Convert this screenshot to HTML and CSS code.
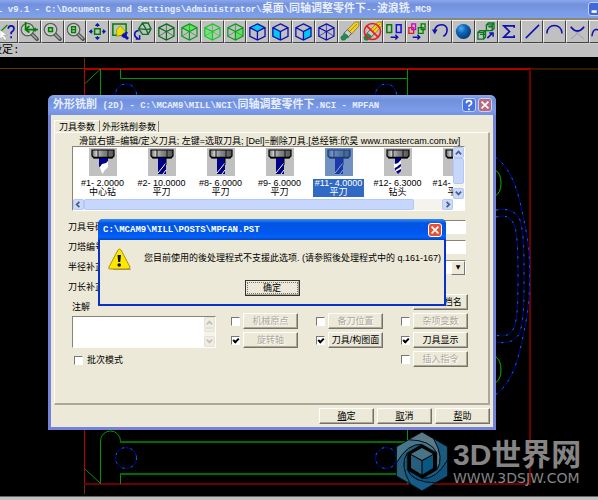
FILE: index.html
```html
<!DOCTYPE html>
<html lang="zh-CN">
<head>
<meta charset="utf-8">
<title>v9.1</title>
<link rel="stylesheet" href="styles.css">
</head>
<body>
<svg class="defs" aria-hidden="true">
  <defs>
    <radialGradient id="ball" cx=".35" cy=".3" r=".75"><stop offset="0" stop-color="#4fb0ef"/><stop offset=".4" stop-color="#1068bc"/><stop offset="1" stop-color="#043870"/></radialGradient>
    <linearGradient id="bolt" x1="0" x2="1"><stop offset="0" stop-color="#666"/><stop offset=".2" stop-color="#ccc"/><stop offset=".5" stop-color="#888"/><stop offset="1" stop-color="#555"/></linearGradient>
    <symbol id="cube" viewBox="0 0 22 22"><path d="M11 3l8 4v9l-8 4-8-4V7zM3 7l8 4 8-4M11 11v9" fill="none" stroke="currentColor" stroke-width="1.3"/><path d="M11 3v8M3 16l8-5 8 5" fill="none" stroke="currentColor" stroke-width=".7"/></symbol>
    <symbol id="solid" viewBox="0 0 22 22"><path d="M11 3l8 4v9l-8 4-8-4V7zM3 7l8 4 8-4M11 11v9" fill="none" stroke="currentColor" stroke-width="1.4"/></symbol>
    <symbol id="lens" viewBox="0 0 22 22"><path d="M13 13l6 6" stroke="#555" stroke-width="4" stroke-linecap="round"/><path d="M13 13l6 6" stroke="#aaa" stroke-width="1.5"/><circle cx="9" cy="9" r="6.5" fill="#bcc8bc" stroke="#606060" stroke-width="1.6"/><circle cx="9" cy="9" r="5.2" fill="none" stroke="#ddd" stroke-width=".8"/></symbol>
    <symbol id="eraser" viewBox="0 0 22 22"><path d="M9 9l8-8h4v4l-8 9z" fill="#f0cf28" stroke="#806800" stroke-width=".7"/><path d="M11 11l8-8" stroke="#aa8500"/><path d="M5 13l4-4 4 4-4 5z" fill="#ccc" stroke="#444" stroke-width=".8"/><path d="M2 17l4-4 4 3-4 4H3z" fill="#258a50" stroke="#174" stroke-width=".8"/></symbol>
    <symbol id="head" viewBox="0 0 28 28"><rect width="28" height="28" fill="#c0c0c0"/><path d="M3 2h22v6l-2 2H5L3 8z" fill="url(#bolt)" stroke="#000" stroke-width="1.2"/><path d="M9 2v7M19 2v7" stroke="#111"/><path d="M4 9.500h20" stroke="#000" stroke-width="1.500"/></symbol>
    <symbol id="endmill" viewBox="0 0 28 28"><use href="#head"/><path d="M10 10h8v16h-8z" fill="#000084"/><path d="M10 25l8-10M15 26l3-4" stroke="#fff"/><path d="M18 10v7" stroke="#000"/></symbol>
    <symbol id="center" viewBox="0 0 28 28"><use href="#head"/><path d="M10 10h9v6l-9 3z" fill="#000084"/><path d="M11 19l2-3 4-1 2-2v6l-4 4-1 3-2-3z" fill="#fff"/></symbol>
    <symbol id="drill" viewBox="0 0 28 28"><use href="#head"/><path d="M11 10h6v13l-3 3-3-4z" fill="#000084"/><path d="M10 16c5 0 5-3 7-4v4c-3 1-4 4-7 4zM11 24c1-4 4-3 6-6v3z" fill="#fff"/></symbol>
    <path id="blade" d="M12 9L26 1L38 8Q49 27.500 40.700 38.900L40.700 21.900Q35 9 12 9z"/>
  </defs>
</svg>
<main class="app">
  <header class="titlebar">
    <span class="caption">L v9.1 - C:\Documents and Settings\Administrator\<span class="han">桌面</span>\<span class="han">同轴调整零件下</span>--<span class="han">波浪铣</span>.MC9</span>
    <button class="win-btn" aria-label="最小化"><svg viewBox="0 0 14 14"><path d="M3 10h6" stroke="#fff" stroke-width="3"/></svg></button>
  </header>
  <div class="toolbar-clip">
  <nav class="toolbar">
    <button aria-label="帮助"><svg viewBox="0 0 22 22"><path d="M3 13l9-9" stroke="#080" stroke-width="1.3"/><path d="M4 9v10l3-2 3 4 1-3-3-3h4z" fill="#fff" stroke="#999" stroke-width=".6"/><path d="M13 8q0-3 3-3t3 3q0 2-3 4v2M16 16v2" fill="none" stroke="#1010b0" stroke-width="1.8"/></svg></button>
    <button aria-label="上一视窗"><svg viewBox="0 0 22 22"><use href="#lens"/><path d="M7 1v8h13M11 5L7 9l4 3M17 7v4" fill="none" stroke="#008000" stroke-width="1.8"/></svg></button>
    <button aria-label="窗口缩放"><svg viewBox="0 0 22 22"><use href="#lens"/><path d="M7 7h4v4H7z" fill="none" stroke="#008000" stroke-width="1.6"/></svg></button>
    <button aria-label="缩小"><svg viewBox="0 0 22 22"><use href="#lens"/><path d="M7 6h4v6H7zM7 9h4" fill="none" stroke="#008000" stroke-width="1.5"/></svg></button>
    <button aria-label="适度化"><svg viewBox="0 0 22 22"><path d="M8 8h6v6H8z" fill="none" stroke="#008000" stroke-width="1.6"/><path d="M11 3v3M9 5l2-2 2 2M11 19v-3M9 17l2 2 2-2M3 11h3M5 9l-2 2 2 2M19 11h-3M17 9l2 2-2 2" fill="none" stroke="#1010b0" stroke-width="1.4"/></svg></button>
    <button aria-label="重画"><svg viewBox="0 0 22 22"><path d="M3 3h14v12H3z" fill="none" stroke="#008000" stroke-width="1.6"/><path d="M13 13l6 6" stroke="#1010b0" stroke-width="3"/><path d="M7 9l4-4 5 6-4 4-5 1z" fill="#e8e000" stroke="#887700" stroke-width=".6"/><path d="M12 16l5-5 2 1-4 6z" fill="#1010c0"/></svg></button>
    <button aria-label="旋转视角"><svg viewBox="0 0 22 22"><path d="M6 8l4-6h6l3 6-3 6h-6zM6 8l8 1 5-1M14 9l2 5M14 9l-4-7" fill="none" stroke="#087020" stroke-width="1.4"/><path d="M6 10c-6 1-5 7-1 8M3 19h4v-4" fill="none" stroke="#1010b0" stroke-width="1.6"/></svg></button>
    <button class="dark" aria-label="等角视图"><svg viewBox="0 0 22 22"><use href="#cube"/></svg></button>
    <button class="mid" aria-label="俯视图"><svg viewBox="0 0 22 22"><path d="M11 3l8 4-8 4-8-4z" fill="#5ee65e"/><use href="#cube"/></svg></button>
    <button class="lime" aria-label="前视图"><svg viewBox="0 0 22 22"><path d="M3 7l8 4v9l-8-4z" fill="#80dc80"/><use href="#cube"/></svg></button>
    <button class="mid" aria-label="侧视图"><svg viewBox="0 0 22 22"><path d="M19 7l-8 4v9l8-4z" fill="#66dd66"/><use href="#cube"/></svg></button>
    <button class="blue" aria-label="俯视构图面"><svg viewBox="0 0 22 22"><path d="M11 3l8 4-8 4-8-4z" fill="#00c8f0"/><use href="#solid"/></svg></button>
    <button class="blue" aria-label="前视构图面"><svg viewBox="0 0 22 22"><path d="M3 7l8 4v9l-8-4z" fill="#00c8f0"/><use href="#solid"/></svg></button>
    <button class="blue" aria-label="侧视构图面"><svg viewBox="0 0 22 22"><path d="M19 7l-8 4v9l8-4z" fill="#00c8f0"/><use href="#solid"/></svg></button>
    <button class="blue" aria-label="空间构图面"><svg viewBox="0 0 22 22"><use href="#cube"/></svg></button>
    <button aria-label="删除"><svg viewBox="0 0 22 22"><use href="#eraser"/></svg></button>
    <button aria-label="恢复删除"><svg viewBox="0 0 22 22"><use href="#eraser"/><circle cx="11" cy="11" r="8.5" fill="none" stroke="#f01818" stroke-width="1.7"/><path d="M5 5l12 12" stroke="#f01818" stroke-width="1.7"/></svg></button>
    <button aria-label="平移"><svg viewBox="0 0 22 22"><path d="M3 4h5v8H3z" fill="none" stroke="#008000" stroke-width="1.6"/><path d="M13 4h5v8h-5z" fill="none" stroke="#1010e0" stroke-width="1.6"/><path d="M7 17h7M12 14.500l2.500 2.500-2.500 2.500" fill="none" stroke="#1010b0" stroke-width="1.5"/></svg></button>
    <button aria-label="复制"><svg viewBox="0 0 22 22"><g fill="none" stroke-width="1.4"><path d="M2 7h5v6H2z" stroke="#e02020"/><path d="M5 3h4v6H5z" stroke="#d000d0"/><path d="M12 7h5v6h-5zM15 3h4v6h-4z" stroke="#008000"/><path d="M6 17h7M11 14.500l2.500 2.500-2.500 2.500" stroke="#1010b0" stroke-width="1.5"/></g></svg></button>
    <button aria-label="撤消"><svg viewBox="0 0 22 22"><path d="M5 10c1-8 13-8 13-1 0 3-1 6-4 7" fill="none" stroke="#1010b0" stroke-width="1.7"/><path d="M2 9h6l-3 5z" fill="#1010b0"/></svg></button>
    <button aria-label="着色"><svg viewBox="0 0 22 22"><circle cx="11" cy="11" r="8" fill="url(#ball)"/></svg></button>
    <button aria-label="视窗"><svg viewBox="0 0 22 22"><path d="M2 12h6v7H2zM2 12l2-2h6v7l-2 2M8 12l2-2M11 4h6v6h-6zM11 4l2-2h6v6l-2 2M17 4l2-2M4 14h6M13 6h5" fill="none" stroke="#087820" stroke-width="1.4"/><path d="M12 18l5-5M14 12.500h4v4" fill="none" stroke="#1010b0" stroke-width="1.6"/></svg></button>
    <button aria-label="统计"><svg viewBox="0 0 22 22"><path d="M16 7V5H5l6 6-6 6h11v-2" fill="none" stroke="#1010b0" stroke-width="1.8"/></svg></button>
    <button aria-label="直线"><svg viewBox="0 0 22 22"><path d="M4 18L18 4" stroke="#1010b0" stroke-width="1.6"/></svg></button>
    <button aria-label="圆弧"><svg viewBox="0 0 22 22"><path d="M3 13C3 2 19 2 19 13" fill="none" stroke="#1010b0" stroke-width="1.6"/></svg></button>
    <button aria-label="修剪"><svg viewBox="0 0 22 22"><path d="M4 19L18 7M18 19L5 8" stroke="#9898b8"/><path d="M4 6q7 9 14 0" fill="none" stroke="#1010b0" stroke-width="2"/></svg></button>
    <button aria-label="曲线"><svg viewBox="0 0 22 22"><path d="M2 16C3 7 9 7 11 13" fill="none" stroke="#1010b0" stroke-width="1.6"/></svg></button>
  </nav>
  </div>
  <div class="prompt"><span>设定:</span></div>
  <section class="canvas">
    <svg class="cad" viewBox="0 57 598 439" aria-hidden="true">
      <g fill="none">
        <path d="M0 68.500H84M531 69H598M84.500 58V69M84.500 484v10" stroke="#6c3400"/>
        <path d="M84.500 69V484" stroke="#c00000"/><path d="M84 69H531" stroke="#b00000" stroke-width="2"/>
        <path d="M530 69V484M84 484H531" stroke="#700000" stroke-width="2"/>
        <path d="M85 83.500L100.500 69V96M120.500 69v9.500H407.500M407.500 69V96M85 469l15.500 14.500V441a10 10 0 0 1 20 0v1M120.500 484V474" stroke="#009800"/>
        <path d="M120 442H407M120 474H407" stroke="#006c00" stroke-width="2"/><path d="M407.500 430V484" stroke="#009800"/>
        <path d="M495 170q6 3 6 13t-6 13M495 356q6 4 6 14t-6 13" stroke="#00b800"/>
        <g stroke="#0000b0"><circle cx="126" cy="94.500" r="10.500"/><circle cx="386" cy="94.500" r="10.500"/><circle cx="126" cy="458" r="10.500"/><circle cx="386" cy="458" r="10.500"/><path d="M495 157C516 171 521 205 527 236Q530 256 529.500 276Q530 296 527 316C521 347 516 381 495 395M496 210c12-2 20 1 24 10 4 14 4 32 4 56s0 42-4 56c-4 9-12 12-24 10M496 217c10-3 16 1 19 10 3 13 3 30 3 49s0 36-3 49c-3 9-9 13-19 10"/></g>
        <g stroke="#008c80" stroke-dasharray="2 7"><circle cx="126" cy="94.500" r="10.500"/><circle cx="386" cy="94.500" r="10.500"/><circle cx="126" cy="458" r="10.500"/><circle cx="386" cy="458" r="10.500"/><path d="M495 157C516 171 521 205 527 236Q530 256 529.500 276Q530 296 527 316C521 347 516 381 495 395M496 210c12-2 20 1 24 10 4 14 4 32 4 56s0 42-4 56c-4 9-12 12-24 10M496 217c10-3 16 1 19 10 3 13 3 30 3 49s0 36-3 49c-3 9-9 13-19 10"/></g>
      </g>
    </svg>
  </section>
  <footer class="status"></footer>

  <aside class="brand">
    <svg class="brand-logo" viewBox="0 0 52 60" aria-hidden="true">
      <g stroke="#001018" stroke-width=".8">
        <use href="#blade" fill="#5c7986"/>
        <use href="#blade" fill="#1c5b80" transform="rotate(60 26 30.400)"/>
        <use href="#blade" fill="#10527c" transform="rotate(120 26 30.400)"/>
        <use href="#blade" fill="#155c88" transform="rotate(180 26 30.400)"/>
        <use href="#blade" fill="#285d7b" transform="rotate(240 26 30.400)"/>
        <use href="#blade" fill="#48758a" transform="rotate(300 26 30.400)"/>
      </g>
      <path d="M26 14l14.500 8.500v16L26 47l-14.500-8.500v-16z" fill="#000"/>
      <path d="M26 17l11 6-11 6-11-6z" fill="#497487"/><path d="M15 24l10.500 6v13.500L15 37z" fill="#285d7b"/><path d="M37 24l-10.500 6v13.500L37 37z" fill="#075783"/>
    </svg>
    <div class="brand-text"><strong>3D世界网</strong><span>WWW.3DSJW.COM</span></div>
  </aside>

  <section class="dialog" role="dialog" aria-labelledby="dlg-title">
    <header class="dialog-head">
      <h1 id="dlg-title" class="caption"><span class="han">外形铣削</span> (2D) - C:\MCAM9\MILL\NCI\<span class="han">同轴调整零件下</span>.NCI - MPFAN</h1>
      <button class="win-btn help" aria-label="说明"><svg viewBox="0 0 14 14"><path d="M4 5q0-3 3-3t3 3q0 1-3 3v1M7 11v2" fill="none" stroke="#fff" stroke-width="2"/></svg></button>
      <button class="win-btn dim" aria-label="关闭"><svg viewBox="0 0 14 14"><path d="M3 3l8 8M11 3l-8 8" stroke="#fff" stroke-width="2"/></svg></button>
    </header>
    <div class="dialog-body">
      <div class="tabs" role="tablist"><button role="tab" class="tab active" aria-selected="true">刀具参数</button><button role="tab" class="tab">外形铣削参数</button></div>
      <div class="panel">
        <p class="hint">滑鼠右键=编辑/定义刀具; 左键=选取刀具; [Del]=删除刀具.[总经销:欣昊 www.mastercam.com.tw]</p>
        <div class="tool-list">
          <ul class="tools">
            <li><svg viewBox="0 0 28 28"><use href="#center"/></svg><span>#1- 2.0000<br>中心钻</span></li>
            <li><svg viewBox="0 0 28 28"><use href="#endmill"/></svg><span>#2- 10.0000<br>平刀</span></li>
            <li><svg viewBox="0 0 28 28"><use href="#endmill"/></svg><span>#8- 6.0000<br>平刀</span></li>
            <li><svg viewBox="0 0 28 28"><use href="#endmill"/></svg><span>#9- 6.0000<br>平刀</span></li>
            <li class="selected"><svg viewBox="0 0 28 28"><use href="#endmill"/><path d="M0 0h28v28H0z" fill="#316ac5" opacity=".55"/></svg><span>#11- 4.0000<br>平刀</span></li>
            <li><svg viewBox="0 0 28 28"><use href="#drill"/></svg><span>#12- 6.3000<br>钻头</span></li>
            <li><svg viewBox="0 0 28 28"><use href="#endmill"/></svg><span>#14- 5.0000<br>平刀</span></li>
          </ul>
          <div class="vscroll"><button aria-label="向上"><svg viewBox="0 0 10 10"><path d="M2 7l3-3 3 3"/></svg></button><i></i><button aria-label="向下"><svg viewBox="0 0 10 10"><path d="M2 3l3 3 3-3"/></svg></button></div>
          <div class="hscroll"><button aria-label="向左"><svg viewBox="0 0 10 10"><path d="M6 2L3 5l3 3"/></svg></button><i></i><button aria-label="向右"><svg viewBox="0 0 10 10"><path d="M4 2l3 3-3 3"/></svg></button></div>
        </div>
        <div class="fields">
          <label for="f1">刀具号码</label><input id="f1" type="text">
          <label for="f2">刀塔编号</label><input id="f2" type="text">
          <label for="f3">半径补正</label><span class="combo"><select id="f3"><option></option></select></span>
          <span>刀长补正</span>
        </div>
        <div class="lower">
          <div class="notes">
            <label for="memo">注解</label>
            <div class="memo-box"><textarea id="memo"></textarea><div class="vscroll off"><button aria-label="上" disabled><svg viewBox="0 0 10 10"><path d="M2 7l3-3 3 3"/></svg></button><i></i><button aria-label="下" disabled><svg viewBox="0 0 10 10"><path d="M2 3l3 3 3-3"/></svg></button></div></div>
            <label class="batch"><input type="checkbox">批次模式</label>
          </div>
          <div class="options">
            <div class="opt name"><button class="btn">改NCI档名</button></div>
            <div class="opt c1"><input type="checkbox" aria-label="机械原点"><button class="btn" disabled>机械原点</button></div>
            <div class="opt"><input type="checkbox" aria-label="备刀位置"><button class="btn" disabled>备刀位置</button></div>
            <div class="opt"><input type="checkbox" aria-label="杂项变数"><button class="btn" disabled>杂项变数</button></div>
            <div class="opt c1"><input type="checkbox" aria-label="旋转轴" checked><button class="btn" disabled>旋转轴</button></div>
            <div class="opt"><input type="checkbox" aria-label="刀具/构图面" checked><button class="btn">刀具/构图面</button></div>
            <div class="opt"><input type="checkbox" aria-label="刀具显示" checked><button class="btn">刀具显示</button></div>
            <div class="opt c3"><input type="checkbox" aria-label="插入指令"><button class="btn" disabled>插入指令</button></div>
          </div>
        </div>
      </div>
      <div class="actions"><button class="btn"><u>确</u>定</button><button class="btn"><u>取</u>消</button><button class="btn"><u>帮</u>助</button></div>
    </div>
  </section>

  <section class="alert" role="alertdialog" aria-labelledby="al-title">
    <header class="alert-head"><h2 id="al-title" class="caption">C:\MCAM9\MILL\POSTS\MPFAN.PST</h2><button class="win-btn close" aria-label="关闭"><svg viewBox="0 0 14 14"><path d="M3 3l8 8M11 3l-8 8" stroke="#fff" stroke-width="2"/></svg></button></header>
    <div class="alert-body">
      <div class="alert-row">
        <svg class="warn" viewBox="0 0 24 24" aria-hidden="true"><path d="M13 4L23 22H5z" fill="#666" opacity=".6"/><path d="M10 2q1.500-2 3 0l9 17q0 2-2 2H2q-2 0-1-2z" fill="#fce803" stroke="#b09000"/><path d="M9.500 7h3.500l-.8 7h-2z" fill="#111"/><circle cx="11.200" cy="17" r="1.800" fill="#111"/></svg>
        <p>您目前使用的後处理程式不支援此选项. (请参照後处理程式中的 q.161-167)</p>
      </div>
      <button class="btn default"><span>确定</span></button>
    </div>
  </section>
</main>
</body>
</html>
```
FILE: styles.css
```css
* { box-sizing: border-box; }
body { margin: 0; background: #000; font: 9px/10px "Liberation Sans", "Noto Sans CJK SC", sans-serif; color: #000; }
button, input, select, textarea { font: inherit; margin: 0; padding: 0; border-radius: 0; }
h1, h2, p, ul { margin: 0; padding: 0; }
.defs { position: absolute; width: 0; height: 0; }
.app { position: relative; display: flex; flex-direction: column; min-height: 100vh; overflow: hidden; }

.caption { flex: 1; font: bold 9px/14px "Liberation Mono", "Noto Sans CJK SC", monospace; color: #e8eefc; white-space: nowrap; }
.han { font-size: 11px; }
.win-btn { flex: none; width: 14px; height: 14px; border: 1px solid #c4d2fa; border-radius: 3px; background: #3f68dc; }
.win-btn svg { display: block; width: 12px; height: 12px; }

.titlebar { display: flex; align-items: center; height: 18px; margin-right: -4px; background: linear-gradient(#8aa6ec, #7290dc 25%, #7c9ce8 70%, #7ea0ea); }
.titlebar .caption { margin-left: -3px; }
.toolbar-clip { overflow: hidden; border-top: 2px solid #8c8876; background: #c0c0c0; }
.toolbar { display: grid; grid-template-columns: repeat(27, 1fr); height: 23px; margin: 0 -14px 0 -5px; }
.toolbar button { overflow: hidden; border: 1px solid; border-color: #f0f0f0 #444 #444 #f0f0f0; background: #c0c0c0; }
.toolbar svg { display: block; width: 100%; height: 100%; }
.dark { color: #086818; }
.mid { color: #109820; }
.lime { color: #18c828; }
.blue { color: #1010b0; }
.prompt { height: 14px; overflow: hidden; background: #c0c0c0; border-top: 1px solid #d0d0d0; font: 11px/13px "Liberation Mono", "Noto Sans CJK SC", monospace; }
.prompt span { display: block; margin-left: -9px; }
.canvas { flex: 1; background: #000; }
.cad { display: block; width: 598px; height: 439px; }
.status { flex: none; height: 4px; border-top: 1px solid #666; background: #c0c0c0; }

.brand { position: absolute; left: 396px; top: 431px; display: flex; align-items: center; gap: 5px; color: #858585; }
.brand-logo { width: 52px; height: 60px; }
.brand-text { display: flex; flex-direction: column; font: 14px/12px "DejaVu Sans", sans-serif; }
.brand-text strong { font: bold 30px/34px "Liberation Sans", "Noto Sans CJK SC", sans-serif; }

.dialog { position: absolute; left: 48px; top: 95px; width: 448px; padding: 0 3px 3px; background: #7482da; border-radius: 6px 6px 0 0; }
.dialog-head { display: flex; align-items: center; gap: 2px; height: 20px; margin: 0 -3px; padding: 0 4px 0 5px; border-radius: 6px 6px 0 0; background: linear-gradient(#8ca8ee, #7090dc 25%, #7c9ce8 75%, #7690e0); }
.help { background: #4872e4; }
.dim { background: #b86a80; }
.dialog-body { padding: 5px 3px 3px; background: #ece9d8; }
.tabs { display: flex; align-items: flex-end; height: 12px; }
.tab { height: 11px; padding: 0 2px; border: 0; border-right: 1px solid #888474; background: #ece9d8; line-height: 10px; }
.tab.active { height: 12px; padding: 0 4px; border-top: 1px solid #fff; border-left: 1px solid #fff; }
.panel { padding: 3px 20px 36px 13px; border: 1px solid #fff; border-right: 2px solid #aca899; border-bottom: 2px solid #aca899; }
.hint { margin-left: 11px; white-space: nowrap; line-height: 10px; }
.tool-list { display: grid; grid-template-columns: 1fr 11px; grid-template-rows: 52px 11px; margin: 0 3px 0 4px; border: 1px solid; border-color: #888474 #fff #fff #888474; background: #fff; }
.tools { display: flex; min-width: 0; overflow: hidden; list-style: none; }
.tools li { flex: none; display: flex; flex-direction: column; align-items: center; gap: 3px; width: 59px; padding-top: 1px; text-align: center; white-space: nowrap; }
.tools svg { width: 28px; height: 28px; }
.tools span { padding: 0 2px; line-height: 9px; }
.selected span { background: #316ac5; color: #fff; }
.vscroll, .hscroll { display: flex; background: #f4f3ee; }
.vscroll { flex-direction: column; }
.vscroll button, .hscroll button { flex: none; width: 11px; height: 11px; border: 1px solid #b4c8f6; border-radius: 2px; background: #cbdafc; }
.vscroll svg, .hscroll svg { display: block; width: 9px; height: 9px; fill: none; stroke: #4d6185; stroke-width: 2; }
.vscroll i, .hscroll i { flex: 1; border: 1px solid #b4c8f6; border-radius: 2px; background: #c6d6fc; }
.vscroll i { margin-bottom: 4px; }
.hscroll i { margin-right: 28px; }
.vscroll.off button, .vscroll.off i { border-color: #e4e2d6; background: #f0eee4; }
.vscroll.off svg { stroke: #c4c2b6; }

.fields { display: grid; grid-template-columns: 58px 1fr; grid-auto-rows: 14px; gap: 6px 0; margin: 9px 2px 0 0; align-items: center; }
.fields input, .combo { height: 14px; border: 1px solid; border-color: #888474 #fff #fff #888474; background: #fff; }
.combo { position: relative; }
.combo select { display: block; appearance: none; width: 100%; height: 12px; border: 0; background: #fff; }
.combo::after { content: "▼"; position: absolute; right: 0; top: 0; width: 12px; height: 12px; border: 1px solid; border-color: #fff #777 #777 #fff; background: #ece9d8; font: 6px/10px "DejaVu Sans", sans-serif; text-align: center; pointer-events: none; }

.lower { display: flex; justify-content: space-between; }
.notes { display: flex; flex-direction: column; width: 148px; padding: 7px 0 0 4px; }
.notes > label { line-height: 12px; }
.memo-box { display: flex; height: 32px; margin: 3px 0 6px; border: 1px solid; border-color: #888474 #fff #fff #888474; background: #fff; }
.memo-box textarea { flex: 1; min-width: 0; border: 0; resize: none; background: #fff; }
.batch { display: flex; align-items: center; gap: 4px; padding-left: 2px; }
.options { display: grid; grid-template-columns: repeat(3, 67px); grid-auto-rows: 16px; gap: 3px 18px; }
.opt { display: flex; align-items: center; gap: 3px; }
.name, .c3 { grid-column: 3; }
.name { justify-content: flex-end; }
.c1 { grid-column: 1; }
input[type="checkbox"] { appearance: none; flex: none; width: 9px; height: 9px; border: 1px solid; border-color: #777 #fff #fff #777; background: #fff; }
input[type="checkbox"]:checked::before { content: ""; display: block; box-sizing: border-box; width: 6px; height: 4px; margin: 1px 0 0 1px; border: solid #000; border-width: 0 0 2px 2px; transform: rotate(-45deg); }
.btn { width: 55px; height: 16px; border: 1px solid; border-color: #fff #777364 #777364 #fff; box-shadow: inset -1px -1px #aca899; background: #ece9d8; color: #000; line-height: 12px; white-space: nowrap; }
.btn:disabled { color: #aca899; text-shadow: 1px 1px #fff; }
.actions { display: flex; justify-content: flex-end; gap: 3px; padding-top: 3px; }

.alert { position: absolute; left: 98px; top: 219px; width: 348px; padding: 0 2px 2px; background: #0831c8; border-radius: 5px 5px 0 0; }
.alert-head { display: flex; align-items: center; height: 21px; margin: 0 -2px; padding: 0 4px 0 5px; border-radius: 5px 5px 0 0; background: linear-gradient(#3a8cf8, #0054e0 20%, #0058ee 70%, #0364fa 85%, #0044c8); }
.alert-head .caption { color: #fff; }
.close { background: #e25332; border-color: #fff; }
.alert-body { display: flex; flex-direction: column; align-items: center; padding: 8px; background: #ece9d8; }
.alert-row { display: flex; align-self: stretch; gap: 12px; height: 32px; }
.warn { flex: none; width: 24px; height: 24px; }
.alert-row p { padding-top: 5px; white-space: nowrap; }
.default { border-color: #333; padding: 1px; }
.default span { display: block; border: 1px dotted #777; line-height: 10px; }
```
